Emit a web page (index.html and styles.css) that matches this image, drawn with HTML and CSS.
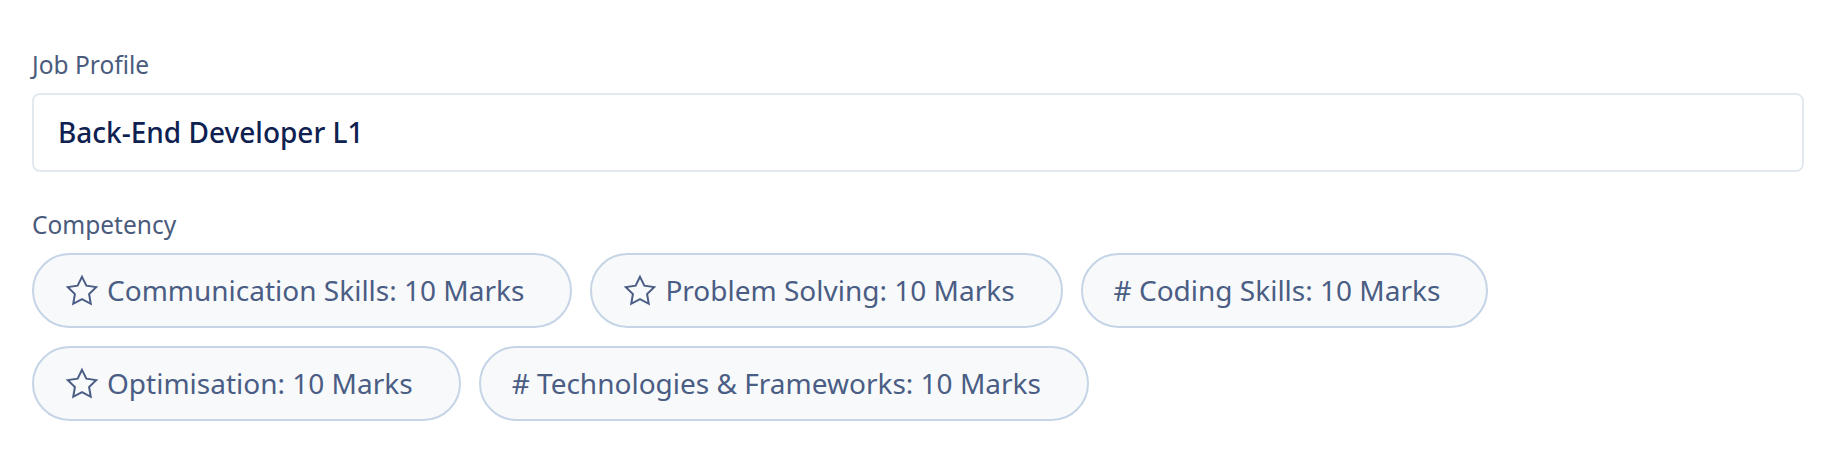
FILE: index.html
```html
<!DOCTYPE html>
<html lang="en">
<head>
    <meta charset="UTF-8">
    <meta name="viewport" content="width=device-width, initial-scale=1.0">
    <title>Job Profile</title>
    <link rel="stylesheet" href="styles.css">
</head>
<body>
    <div class="form">
        <label class="field-label" for="jobProfile">Job Profile</label>
        <div class="field-box" id="jobProfile">Back-End Developer L1</div>

        <div class="field-label competency-label">Competency</div>
        <div class="chips">
            <span class="chip">
                <svg class="star" viewBox="0 0 24 24"><polygon points="12 2 15.09 8.26 22 9.27 17 14.14 18.18 21.02 12 17.77 5.82 21.02 7 14.14 2 9.27 8.91 8.26 12 2"/></svg>
                Communication Skills: 10 Marks
            </span>
            <span class="chip">
                <svg class="star" viewBox="0 0 24 24"><polygon points="12 2 15.09 8.26 22 9.27 17 14.14 18.18 21.02 12 17.77 5.82 21.02 7 14.14 2 9.27 8.91 8.26 12 2"/></svg>
                Problem Solving: 10 Marks
            </span>
            <span class="chip"># Coding Skills: 10 Marks</span>
            <span class="chip">
                <svg class="star" viewBox="0 0 24 24"><polygon points="12 2 15.09 8.26 22 9.27 17 14.14 18.18 21.02 12 17.77 5.82 21.02 7 14.14 2 9.27 8.91 8.26 12 2"/></svg>
                Optimisation: 10 Marks
            </span>
            <span class="chip"># Technologies &amp; Frameworks: 10 Marks</span>
        </div>
    </div>
</body>
</html>
```

FILE: styles.css
```css
* {
    margin: 0;
    padding: 0;
    box-sizing: border-box;
}
body {
    font-family: 'Noto Sans', 'Open Sans', sans-serif;
    background: #fff;
    color: #475a80;
}
.form {
    padding: 48px 32px 0 32px;
}
.field-label {
    display: block;
    font-size: 24.5px;
    line-height: 33px;
    color: #4a5b7c;
    margin-bottom: 12px;
}
.competency-label {
    margin-top: 36px;
}
.field-box {
    border: 2px solid #e3e9f1;
    border-radius: 8px;
    padding: 20px 24px;
    font-size: 28px;
    line-height: 35px;
    font-weight: 500;
    color: #0f2150;
}
.chips {
    display: flex;
    flex-wrap: wrap;
    gap: 18px;
}
.chip {
    display: inline-flex;
    align-items: center;
    gap: 8px;
    padding: 18px 46px 18px 31px;
    border: 2px solid #c5d4e6;
    border-radius: 40px;
    background: #f8f9fb;
    font-size: 28px;
    line-height: 35px;
    color: #4a5d84;
}
.star {
    width: 34px;
    height: 34px;
    fill: none;
    stroke: #4a5d84;
    stroke-width: 1.4;
    stroke-linejoin: miter;
}
```
